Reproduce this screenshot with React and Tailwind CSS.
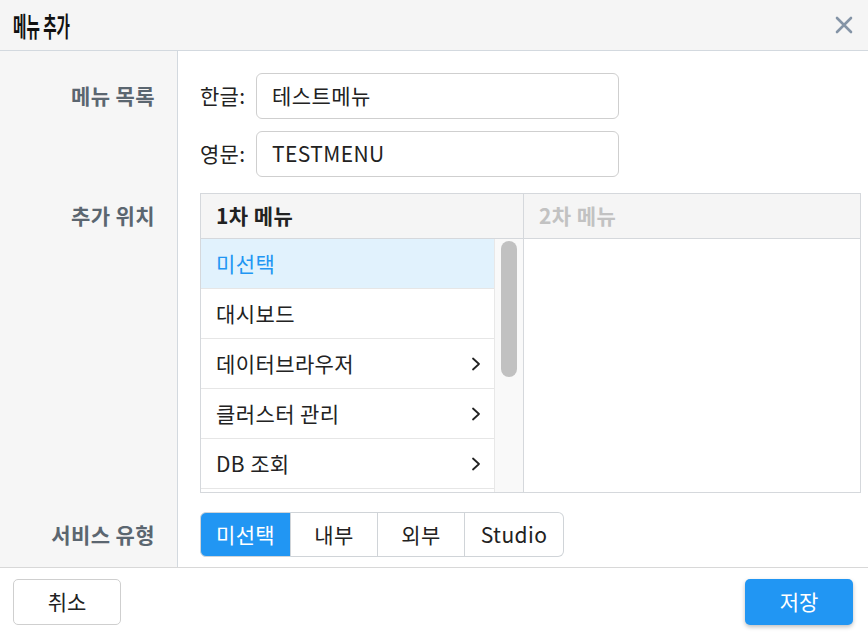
import React from 'react';

const font = { fontFamily: '"Noto Sans CJK KR", "Noto Sans", sans-serif' };

const items = [
    { name: '미선택', selected: true },
    { name: '대시보드' },
    { name: '데이터브라우저', sub: true },
    { name: '클러스터 관리', sub: true },
    { name: 'DB 조회', sub: true },
    { name: '사용자 관리', sub: true },
];

const services = [
    { name: '미선택', w: 'w-[91px] rounded-l-[6px] border-[#2196f3]', active: true },
    { name: '내부', w: 'w-[87px] border-l-0' },
    { name: '외부', w: 'w-[87px] border-l-0' },
    { name: 'Studio', w: 'w-[99px] border-l-0 rounded-r-[6px]' },
];

const Chevron = () => (
    <svg width="10" height="16" viewBox="0 0 10 16" fill="none">
        <polyline points="2,2.5 8,8 2,13.5" stroke="#222" strokeWidth="1.8" strokeLinecap="round" strokeLinejoin="round" />
    </svg>
);

const Label = ({ children, h }) => (
    <div className={`flex items-center justify-end pr-[22px] text-[21px] tracking-[0.4px] font-bold text-[#5b6670] ${h}`}>
        {children}
    </div>
);

const TextField = ({ label, value }) => (
    <div className="flex items-center">
        <span className="w-[56px] text-[21px] tracking-[0.3px] text-[#222]">{label}</span>
        <div className="flex h-[46px] w-[363px] items-center rounded-[6px] border border-[#cfcfcf] bg-white px-[15px] text-[21px] tracking-[0.4px] text-[#222]">
            {value}
        </div>
    </div>
);

export default function App() {
    return (
        <div className="flex h-[632px] w-[868px] flex-col bg-white" style={font}>
            {/* Header */}
            <div className="flex h-[51px] shrink-0 items-center justify-between border-b border-[#d3d9df] bg-[#f5f5f5] pl-[13px] pr-[14px]">
                <h1 className="origin-left scale-x-[0.54] text-[27px] font-bold text-[#111] leading-none whitespace-nowrap">
                    메뉴 추가
                </h1>
                <svg width="20" height="20" viewBox="0 0 20 20">
                    <path d="M3 3 L17 17 M17 3 L3 17" stroke="#8494a6" strokeWidth="2.6" strokeLinecap="round" />
                </svg>
            </div>

            {/* Body */}
            <div className="grid flex-1 grid-cols-[178px_1fr] leading-[1.2]">
                <div className="border-r border-[#d3d9df] bg-[#f6f6f6] pt-[22px]">
                    <Label h="h-[46px]">메뉴 목록</Label>
                </div>
                <div className="flex flex-col gap-[12px] pl-[22px] pt-[22px] pb-[16px]">
                    <TextField label="한글:" value="테스트메뉴" />
                    <TextField label="영문:" value="TESTMENU" />
                </div>

                <div className="border-r border-[#d3d9df] bg-[#f6f6f6]">
                    <Label h="h-[45px]">추가 위치</Label>
                </div>
                <div className="pl-[22px] pr-[7px] pb-[19px]">
                    <div className="flex h-[300px] border border-[#d5d8dc]">
                        <div className="flex w-[323px] flex-col border-r border-[#d5d8dc]">
                            <div className="flex h-[45px] shrink-0 items-center border-b border-[#d5d8dc] bg-[#f5f5f5] pl-[15px] text-[21px] tracking-[0.4px] font-bold text-[#222]">
                                1차 메뉴
                            </div>
                            <div className="flex flex-1 overflow-hidden">
                                <div className="flex-1 overflow-hidden">
                                    {items.map((it) => (
                                        <div
                                            key={it.name}
                                            className={`flex h-[50px] items-center justify-between border-b border-[#e6e6e6] pl-[15px] pr-[13px] text-[21px] tracking-[0.4px] ${it.selected ? 'bg-[#e1f2fd] text-[#2196f3]' : 'text-[#222]'}`}
                                        >
                                            <span>{it.name}</span>
                                            {it.sub && <Chevron />}
                                        </div>
                                    ))}
                                </div>
                                <div className="w-[29px] shrink-0 border-l border-[#e8e8e8] bg-[#f9f9f9] pl-[6px] pt-[2px]">
                                    <div className="h-[136px] w-[16px] rounded-full bg-[#c1c1c1]" />
                                </div>
                            </div>
                        </div>
                        <div className="flex flex-1 flex-col">
                            <div className="flex h-[45px] shrink-0 items-center border-b border-[#d5d8dc] bg-[#f5f5f5] pl-[15px] text-[21px] tracking-[0.4px] font-bold text-[#c2c2c2]">
                                2차 메뉴
                            </div>
                        </div>
                    </div>
                </div>

                <div className="border-r border-[#d3d9df] bg-[#f6f6f6]">
                    <Label h="h-[45px]">서비스 유형</Label>
                </div>
                <div className="flex pl-[22px] pb-[10px]">
                    {services.map((s) => (
                        <div
                            key={s.name}
                            className={`flex h-[45px] items-center justify-center border border-[#d0d4d8] text-[21px] tracking-[0.4px] ${s.w} ${s.active ? 'bg-[#2196f3] text-white' : 'bg-white text-[#222]'}`}
                        >
                            {s.name}
                        </div>
                    ))}
                </div>
            </div>

            {/* Footer */}
            <div className="flex h-[65px] shrink-0 items-start justify-between border-t border-[#d8d8d8] pl-[13px] pr-[15px] pt-[11px]">
                <button className="h-[46px] w-[108px] rounded-[5px] border border-[#cfcfcf] bg-white text-[21px] text-[#222]">
                    취소
                </button>
                <button className="h-[46px] w-[108px] rounded-[5px] bg-[#2196f3] text-[21px] text-white shadow-[0_2px_4px_rgba(0,0,0,0.25)]">
                    저장
                </button>
            </div>
        </div>
    );
}
